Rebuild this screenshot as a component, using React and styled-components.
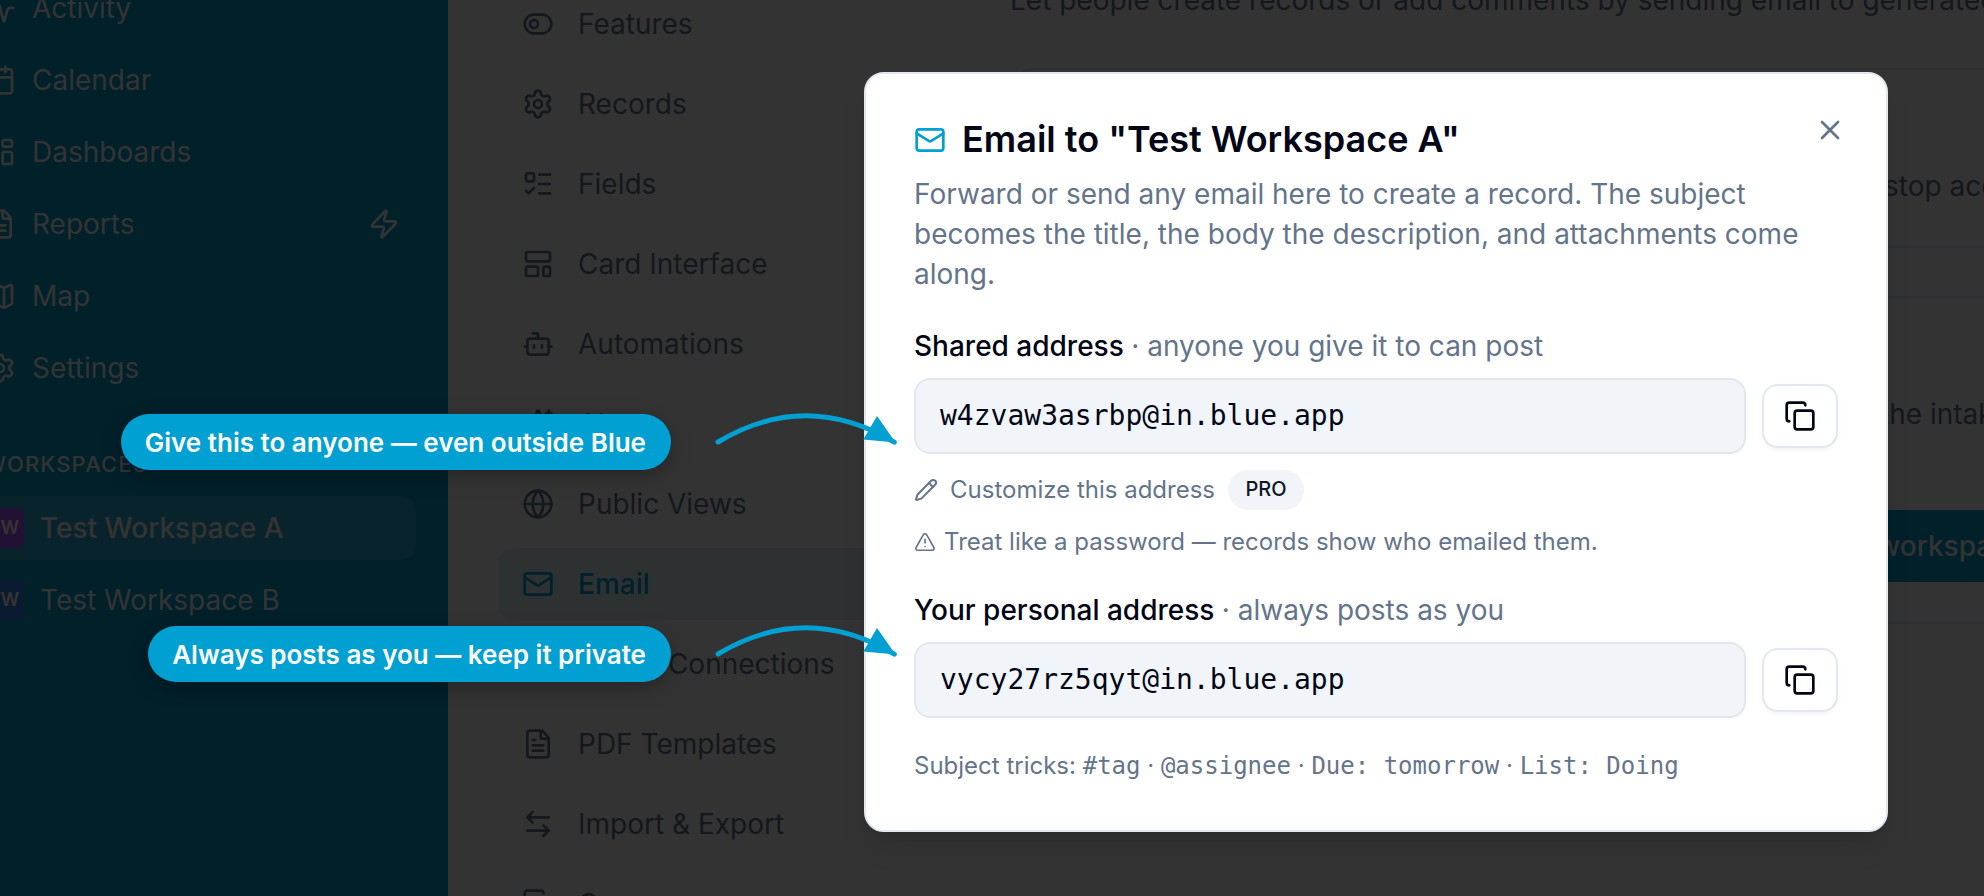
import React from 'react'
import styled, { createGlobalStyle, css } from 'styled-components'
import {
  Activity, ArrowLeftRight, Bot, Calendar, Copy, FileText, Globe, LayoutDashboard,
  LayoutTemplate, ListTodo, Mail, Map, Pencil, Plug, Settings, Sparkles, ToggleLeft,
  TriangleAlert, X, Zap
} from 'lucide-react'

const brand = '#00a0d2'
const slate = '#64748b'
const ink = '#020617'
const line = '#e2e8f0'
const mono = '"DejaVu Sans Mono", monospace'

const GlobalStyle = createGlobalStyle`
  * { box-sizing: border-box; }
  body {
    margin: 0;
    overflow: hidden;
    font-family: Inter, sans-serif;
    font-size: 28px;
    line-height: 40px;
    color: ${ink};
  }
  svg { flex-shrink: 0; display: block; }
`

const Screen = styled.div`
  position: relative;
  display: flex;
  width: 1984px;
  height: 896px;
  overflow: hidden;
  background: #fff;
`

const Sidebar = styled.nav`
  flex: none;
  width: 448px;
  height: 896px;
  overflow: hidden;
  background: ${brand};
  color: #fff;
  padding-right: 32px;
`

const SideList = styled.div`
  margin-top: -24px;
`

const SideItem = styled.div`
  display: flex;
  align-items: center;
  gap: 16px;
  height: 64px;
  margin: 0 0 8px -40px;
  padding: 0 16px 0 24px;
  border-radius: 16px;
  ${p => p.$active && css`
    background: rgba(255, 255, 255, .16);
    font-weight: 500;
  `}
`

const SideLabel = styled.span`
  flex: 1;
  white-space: nowrap;
`

const SideHeading = styled.div`
  margin: 48px 0 16px -16px;
  height: 32px;
  line-height: 32px;
  font-size: 22px;
  font-weight: 500;
  letter-spacing: 1.1px;
  white-space: nowrap;
`

const Avatar = styled.span`
  display: flex;
  align-items: center;
  justify-content: center;
  width: 40px;
  height: 40px;
  border-radius: 8px;
  background: ${p => p.$color};
  font-size: 18px;
  font-weight: 600;
`

const SettingsNav = styled.nav`
  flex: none;
  width: 512px;
  padding-left: 50px;
`

const NavItem = styled.div`
  display: flex;
  align-items: center;
  gap: 24px;
  height: 72px;
  margin-bottom: 8px;
  padding: 0 24px;
  border-radius: 16px;
  color: ${slate};
  white-space: nowrap;
  ${p => p.$active && css`
    background: rgba(0, 160, 210, .1);
    color: ${brand};
    font-weight: 500;
  `}
`

const NavList = styled.div`
  margin-top: -12px;
`

const Content = styled.main`
  flex: none;
  width: 1100px;
  padding-left: 50px;
  color: ${slate};
  white-space: nowrap;
`

const Intro = styled.p`
  margin: -20px 0 48px;
`

const Card = styled.section`
  height: ${p => p.$height}px;
  margin-bottom: 48px;
  border: 2px solid ${line};
  border-radius: 24px;
`

const CardText = styled.p`
  margin: 96px 0 0;
  padding-left: ${p => p.$indent}px;
`

const Primary = styled.div`
  height: 72px;
  margin: 76px 0 0 600px;
  padding: 16px 0 0 265px;
  border-radius: 16px;
  background: ${brand};
  color: #fff;
  font-weight: 500;
`

const Overlay = styled.div`
  position: absolute;
  inset: 0;
  background: rgba(0, 0, 0, .8);
`

const Dialog = styled.div`
  position: absolute;
  left: 864px;
  top: 72px;
  width: 1024px;
  height: 760px;
  padding: 48px;
  background: #fff;
  border: 2px solid ${line};
  border-radius: 20px;
  box-shadow: 0 20px 30px -6px rgba(0, 0, 0, .1), 0 8px 12px -8px rgba(0, 0, 0, .1);
`

const Close = styled.span`
  position: absolute;
  top: 40px;
  right: 40px;
  color: ${slate};
`

const Title = styled.h2`
  display: flex;
  align-items: center;
  gap: 16px;
  margin: 0 0 16px;
  font-size: 36px;
  line-height: 34px;
  font-weight: 600;
  svg { color: ${brand}; }
  span { padding-bottom: 2px; }
`

const Lead = styled.p`
  margin: 0;
  color: ${slate};
`

const Label = styled.div`
  margin: 32px 0 12px;
  font-weight: 500;
  span {
    color: ${slate};
    font-weight: 400;
  }
`

const AddressRow = styled.div`
  display: flex;
  align-items: center;
  gap: 16px;
`

const Address = styled.code`
  flex: 1;
  height: 76px;
  padding: 16px 24px;
  border: 2px solid ${line};
  border-radius: 16px;
  background: #f1f5f9;
  font-family: ${mono};
`

const CopyButton = styled.button`
  display: flex;
  align-items: center;
  justify-content: center;
  width: 76px;
  height: 64px;
  padding: 0;
  border: 2px solid ${line};
  border-radius: 16px;
  background: #fff;
  color: ${ink};
  box-shadow: 0 2px 4px rgba(0, 0, 0, .05);
`

const Customize = styled.div`
  display: flex;
  align-items: center;
  gap: 12px;
  height: 40px;
  margin-top: 16px;
  color: ${slate};
  font-size: 24px;
  line-height: 32px;
`

const Badge = styled.span`
  height: 40px;
  margin-left: 1px;
  padding: 0 17.5px;
  border-radius: 20px;
  background: #f1f5f9;
  color: #0f172a;
  font-size: 20px;
  font-weight: 500;
  line-height: 38px;
`

const Warning = styled.div`
  display: flex;
  align-items: center;
  gap: 8px;
  height: 32px;
  margin-top: 16px;
  color: ${slate};
  font-size: 24px;
  line-height: 32px;
`

const Tricks = styled.div`
  margin-top: 32px;
  color: ${slate};
  font-size: 24px;
  line-height: 32px;
  white-space: nowrap;
  code {
    font-family: ${mono};
    font-size: 24px;
  }
`

const Callout = styled.div`
  position: absolute;
  right: 1313.5px;
  top: ${p => p.$top}px;
  height: 56px;
  padding: 0 24.5px 0 24px;
  border-radius: 28px;
  background: ${brand};
  color: #fff;
  font-size: 26px;
  font-weight: 600;
  line-height: 57px;
  white-space: nowrap;
  box-shadow: 0 6px 20px rgba(0, 0, 0, .25);
`

const Arrow = styled.svg`
  position: absolute;
  left: 700px;
  top: ${p => p.$top}px;
`

const sideItems = [
  [Activity, 'Activity'],
  [Calendar, 'Calendar'],
  [LayoutDashboard, 'Dashboards'],
  [FileText, 'Reports', true],
  [Map, 'Map'],
  [Settings, 'Settings']
]

const navItems = [
  [ToggleLeft, 'Features'],
  [Settings, 'Records'],
  [ListTodo, 'Fields'],
  [LayoutTemplate, 'Card Interface'],
  [Bot, 'Automations'],
  [Sparkles, 'AI'],
  [Globe, 'Public Views'],
  [Mail, 'Email', true],
  [Plug, 'OAuth Connections'],
  [FileText, 'PDF Templates'],
  [ArrowLeftRight, 'Import & Export'],
  [Copy, 'Copy']
]

const AddressField = ({ value }) => (
  <AddressRow>
    <Address>{value}</Address>
    <CopyButton aria-label="Copy"><Copy size={32} /></CopyButton>
  </AddressRow>
)

const CurvedArrow = ({ top }) => (
  <Arrow $top={top} width="210" height="60" viewBox="0 0 210 60" fill="none">
    <path d="M18 42Q106 -10.5 194.3 42.2" stroke={brand} strokeWidth="5" strokeLinecap="round" />
    <path d="M177 16L195.5 42.5L163.3 39.6Z" fill={brand} />
  </Arrow>
)

const App = () => (
  <Screen>
    <GlobalStyle />
    <Sidebar>
      <SideList>
        {sideItems.map(([Icon, label, zap]) => (
          <SideItem key={label}>
            <Icon size={32} />
            <SideLabel>{label}</SideLabel>
            {zap && <Zap size={32} />}
          </SideItem>
        ))}
      </SideList>
      <SideHeading>WORKSPACES</SideHeading>
      <SideItem $active>
        <Avatar $color="#a855f7">TW</Avatar>
        <SideLabel>Test Workspace A</SideLabel>
      </SideItem>
      <SideItem>
        <Avatar $color="#3b82f6">TW</Avatar>
        <SideLabel>Test Workspace B</SideLabel>
      </SideItem>
    </Sidebar>
    <SettingsNav>
      <NavList>
        {navItems.map(([Icon, label, active]) => (
          <NavItem key={label} $active={active}>
            <Icon size={32} />
            {label}
          </NavItem>
        ))}
      </NavList>
    </SettingsNav>
    <Content>
      <Intro>Let people create records or add comments by sending email to generated addresses.</Intro>
      <Card $height={180}>
        <CardText $indent={872}>stop accepting</CardText>
      </Card>
      <Card $height={328}>
        <CardText $indent={868}>the intake</CardText>
        <Primary>workspace</Primary>
      </Card>
    </Content>
    <Overlay />
    <Dialog>
      <Close><X size={32} /></Close>
      <Title><Mail size={32} /><span>Email to "Test Workspace A"</span></Title>
      <Lead>
        Forward or send any email here to create a record. The subject becomes the title, the body
        the description, and attachments come along.
      </Lead>
      <Label>Shared address <span>· anyone you give it to can post</span></Label>
      <AddressField value="w4zvaw3asrbp@in.blue.app" />
      <Customize>
        <Pencil size={24} />
        Customize this address
        <Badge>PRO</Badge>
      </Customize>
      <Warning>
        <TriangleAlert size={22} strokeWidth={1.75} />
        Treat like a password — records show who emailed them.
      </Warning>
      <Label>Your personal address <span>· always posts as you</span></Label>
      <AddressField value="vycy27rz5qyt@in.blue.app" />
      <Tricks>
        Subject tricks: <code>#tag</code> · <code>@assignee</code> · <code>Due: tomorrow</code> · <code>List: Doing</code>
      </Tricks>
    </Dialog>
    <Callout $top={414}>Give this to anyone — even outside Blue</Callout>
    <Callout $top={626}>Always posts as you — keep it private</Callout>
    <CurvedArrow top={400} />
    <CurvedArrow top={612} />
  </Screen>
)

export default App
